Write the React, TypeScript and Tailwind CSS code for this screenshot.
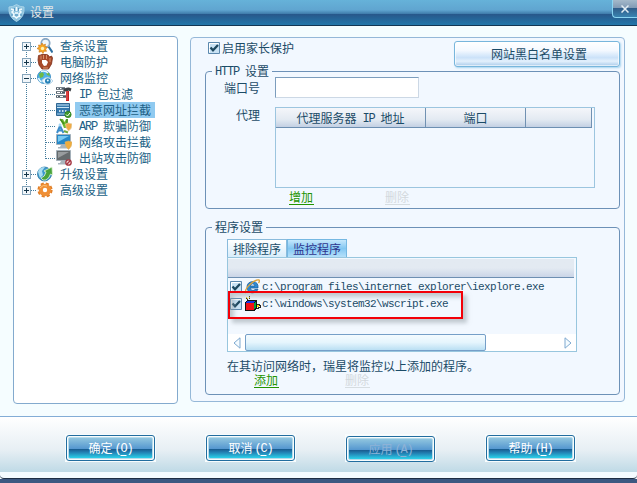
import { Fragment, type ReactNode } from "react";

// latin runs are half the width of a chinese glyph
const Txt = ({ children, small = false }: { children: string; small?: boolean }) => (
  <>
    {children.split(/([\x20-\x7e]+)/).map((part, i) =>
      i % 2 ? (
        <span
          key={i}
          className={`relative -top-px font-['Liberation_Mono',monospace] whitespace-pre ${
            small ? "text-[11px] tracking-[-0.6px]" : "text-[12px] tracking-[-1.2px]"
          }`}
        >
          {part}
        </span>
      ) : (
        <Fragment key={i}>{part}</Fragment>
      )
    )}
  </>
);

const ShieldIcon = () => (
  <svg width="17" height="18" viewBox="0 0 17 18">
    <path d="M1 3Q5 3 8.500 0.500Q12 3 16 3Q17 13 8.500 17.500Q0 13 1 3Z" fill="#8fc4df" stroke="#a9d4e8" />
    <path d="M3 5l3 1-2 2 2 2-1 3M14 5l-3 1 2 2-2 2 1 3M8.500 3v4M6 12l2.500 2 2.500-2M7 9h3" fill="none" stroke="#f1fbff" strokeWidth="1.500" />
    <path d="M6.500 4v3M10.500 4v3M7 11h3M4 10v2M13 10v2" stroke="#4386b2" strokeWidth=".8" />
  </svg>
);

const ScanIcon = () => (
  <svg width="16" height="16" viewBox="0 0 16 16">
    <path d="M11.500 8.500l4 6" stroke="#2d6fa0" strokeWidth="2.200" />
    <circle cx="8.500" cy="5" r="4.200" fill="#eef6fb" stroke="#8aa8c4" strokeWidth="1.800" />
    <path d="M5 5l1.200 2 2.300-.8-.5 2.300 2.500 1-2 1.500 1 2.300-2.500-.1L6 15.500l-1.500-2-2.500.7.4-2.500L0 10.500l2-1.300L1.500 7l2.300.3Z" fill="#f5a623" stroke="#cf7412" strokeWidth=".6" />
    <circle cx="5.500" cy="10.500" r="1.700" fill="#fff3b5" />
  </svg>
);

const GloveIcon = () => (
  <svg width="16" height="16" viewBox="0 0 16 16">
    <path d="M1 6L1.500 1.500l2-.5L5 .500l2 0L9 .500l2 .5 1.500 2 2-1 1 2-1 6-3 5H5L2 11Z" fill="#a84a2a" stroke="#7c2d19" strokeWidth=".8" />
    <path d="M4 1.500v4M6.500 1v4M9.500 1v4M13 4v4" stroke="#dd9b74" strokeWidth=".9" />
    <path d="M5 6h4l2 2-1.500 3.500L7 12 5 9Z" fill="#fff" />
    <path d="M6 14h5" stroke="#dd9b74" />
  </svg>
);

const GlobeEyeIcon = () => (
  <svg width="16" height="16" viewBox="0 0 16 16">
    <circle cx="7" cy="7" r="6.500" fill="#4cb2e8" stroke="#2b82bd" strokeWidth=".8" />
    <path d="M2 4l3-2 2 2-1 3-3 1ZM9 2l3 1 1 3-3-1Z" fill="#6dba45" />
    <path d="M4 1.500Q8 0 11 3M1.500 8q1 3 3 4" fill="none" stroke="#e7f8ff" strokeWidth="1.500" />
    <path d="M4.500 11q6-7.500 11.500 0q-5.500 7-11.500 0Z" fill="#eef8fe" stroke="#a1c6dd" strokeWidth=".7" />
    <circle cx="10.800" cy="11" r="2.800" fill="#2782b8" />
    <circle cx="10.800" cy="10.500" r="1" fill="#e4f9ff" />
  </svg>
);

const FilterIcon = () => (
  <svg width="16" height="16" viewBox="0 0 16 16">
    <path d="M0 2.500h9M0 6.500h9M0 10.500h10" stroke="#4d5b66" strokeWidth="2.500" />
    <path d="M1 2.500h1.500M4 2.500h1.500M1 6.500h3M5 6.500h1M1 10.500h1M4 10.500h3" stroke="#fff" />
    <path d="M7 4.500Q9 1 13 1.500l2.500 1-1 3-2-1-1 1H9Z" fill="#3c4045" />
    <path d="M11.500 5v10" stroke="#c51f22" strokeWidth="3" />
    <path d="M11 5v9" stroke="#f47771" strokeWidth=".8" />
  </svg>
);

const SiteIcon = () => (
  <svg width="16" height="16" viewBox="0 0 16 16">
    <path d="M.5 1.500h13v12H.500Z" fill="#3478ad" stroke="#316792" />
    <path d="M1 3h12M1 5.500h12" stroke="#cae4f4" />
    <path d="M3 9h1.500M6 9h1.500M9 9h1.500" stroke="#fff" strokeWidth="1.500" />
    <path d="M1 12h11" stroke="#a9d2ea" />
    <circle cx="12" cy="12.500" r="3.200" fill="#42992b" stroke="#267818" strokeWidth=".6" />
    <path d="M10 12.500l1.500 1.500 2.500-3" fill="none" stroke="#fff" />
  </svg>
);

const ArpIcon = () => (
  <svg width="16" height="16" viewBox="0 0 16 16">
    <path d="M4 1h3l1.500 3L10 1h2l-1 9H8Z" fill="#72bb30" />
    <path d="M4 1l4 5M11 1v8" stroke="#438d20" strokeWidth="1.400" />
    <path d="M1 15l3-7 3.500 7M2 12.500h5" fill="none" stroke="#3d8dca" strokeWidth="2" />
    <circle cx="4" cy="7" r="1.500" fill="#a3d6f5" />
    <path d="M9.500 6l3-1L16 6q0 5-3.500 7Q9.500 10 9.500 6Z" fill="#f2a945" stroke="#e2cfa0" strokeWidth=".8" />
    <path d="M8 13l4 1.500" stroke="#71a942" strokeWidth="2" />
  </svg>
);

const MonitorIcon = ({ blocked = false }: { blocked?: boolean }) => (
  <svg width="16" height="16" viewBox="0 0 16 16">
    <path d="M.5.500h14v10H.500Z" fill={blocked ? "#666b6d" : "#2688c8"} stroke="#a4b0b9" />
    <path d="M2 2h11L2 8Z" fill={blocked ? "#989c9e" : "#78c9f1"} />
    <path d="M5 11h5l1 2h2v1.500H2V13h2Z" fill="#a9b5bd" />
    {blocked ? (
      <g fill="#f5d7d7" stroke="#a43642" strokeWidth="1.300">
        <circle cx="12.500" cy="12.500" r="2.700" />
        <path d="M10.800 14.200l3.400-3.400" />
      </g>
    ) : (
      <path d="M9 8l3.500-1L16 8q0 5-3.500 7.500Q9 13 9 8Z" fill="#f0ad3c" stroke="#d9b06a" strokeWidth=".6" />
    )}
  </svg>
);

const UpgradeIcon = () => (
  <svg width="16" height="16" viewBox="0 0 16 16">
    <circle cx="7.500" cy="8" r="7" fill="#3c98cb" stroke="#3278a3" strokeWidth=".8" />
    <path d="M1 6Q2 1 8 1L5 5l1 4-3 3Z" fill="#a9ddf2" />
    <path d="M4 12Q8 11 9 6L7 5l8-4 .5 8-2-1Q11 15 6 14Z" fill="#48a33a" stroke="#e2f5d6" strokeWidth=".8" />
  </svg>
);

const GearIcon = () => (
  <svg width="16" height="16" viewBox="0 0 16 16">
    <circle cx="8" cy="8" r="6.300" fill="none" stroke="#e07f28" strokeWidth="2.600" strokeDasharray="3 1.950" />
    <circle cx="8" cy="8" r="4.200" fill="none" stroke="#ef8f35" strokeWidth="4" />
    <path d="M3 6Q6 2 10 4" fill="none" stroke="#ffc579" />
  </svg>
);

const IeIcon = () => (
  <svg width="15" height="15" viewBox="0 0 15 15">
    <path d="M13 9H5q.500 2.500 3 2.500 1 0 2-1h3Q11 14.500 7 14q-5-1-5-6t6-5.500Q13.500 3 13 9ZM5 7h5Q9.500 4.500 7.500 4.800 5.500 5 5 7Z" fill="#2c8ad3" fillRule="evenodd" stroke="#1b5d9c" strokeWidth=".8" />
    <path d="M1 14Q-1 11 5 5.500T14 1q1 1-.5 3" fill="none" stroke="#dfa43b" strokeWidth="1.400" />
  </svg>
);

const ScriptIcon = () => (
  <svg width="16" height="16" viewBox="0 0 16 16" shapeRendering="crispEdges">
    <path d="M0 6l2-2h9l1 1v7l-3 3H0Z" fill="#111" />
    <path d="M1 7h8v7H1Z" fill="#f00f16" />
    <path d="M1 6l2-1h7L9 7H1Z" fill="#1733df" />
    <path d="M9 7l2-2v6l-2 2Z" fill="#00a136" />
    <path d="M3 4l-2-2M4 3V0M12 8h2v1h1v2h-2v1h-1" fill="none" stroke="#222" />
    <path d="M1 1h1v1h1v1H2V2H1ZM4 1h1v1H4ZM12 9h2v2h-2Z" fill="#f6dd16" />
  </svg>
);

const Checkbox = () => (
  <svg width="12" height="12" viewBox="0 0 12 12" className="shrink-0">
    <path d="M.5.500h11v11H.500Z" fill="#c8e2f4" stroke="#5c89ae" />
    <path d="M1.500 10.500v-9h9" fill="none" stroke="#fff" />
    <path d="M2.500 5.500l2.500 2.700 5-5.200" fill="none" stroke="#1d485f" strokeWidth="2.300" />
  </svg>
);

// one 16px high piece of the dotted connector lines
const Branch = ({ from = 0, to = 16, arm = true, toggle }: { from?: number; to?: number; arm?: boolean; toggle?: string }) => (
  <svg width="19" height="16" className="shrink-0" shapeRendering="crispEdges">
    <path d={`M8.500 ${from}V${to}${arm ? "M9 8.500H18" : ""}`} stroke="#447c9c" strokeDasharray="1 1" />
    {toggle && (
      <>
        <path d="M4.500 4.500h8v8h-8Z" fill="#f1f6fa" stroke="#86a5bb" />
        <path d={toggle === "+" ? "M6 8.500h5M8.500 6v5" : "M6 8.500h5"} stroke="#143549" />
      </>
    )}
  </svg>
);

type Item = { label: string; icon: ReactNode; child?: boolean; toggle?: string; active?: boolean };

const items: Item[] = [
  { label: "查杀设置", icon: <ScanIcon />, toggle: "+" },
  { label: "电脑防护", icon: <GloveIcon />, toggle: "+" },
  { label: "网络监控", icon: <GlobeEyeIcon />, toggle: "-" },
  { label: "IP 包过滤", icon: <FilterIcon />, child: true },
  { label: "恶意网址拦截", icon: <SiteIcon />, child: true, active: true },
  { label: "ARP 欺骗防御", icon: <ArpIcon />, child: true },
  { label: "网络攻击拦截", icon: <MonitorIcon />, child: true },
  { label: "出站攻击防御", icon: <MonitorIcon blocked />, child: true },
  { label: "升级设置", icon: <UpgradeIcon />, toggle: "+" },
  { label: "高级设置", icon: <GearIcon />, toggle: "+" },
];

const Tree = () => (
  <div className="h-[368px] w-[165px] rounded-[4px] border border-[#83aace] bg-white pt-px pl-1 text-[#205f85]">
    {items.map((item, i) => (
      <div key={item.label} className="flex h-4 items-center">
        <Branch
          from={i === 0 ? 8 : 0}
          to={i === items.length - 1 ? 8 : 16}
          arm={!item.child}
          toggle={item.toggle}
        />
        {item.child && <Branch to={i === 7 ? 9 : 16} />}
        <span className="w-4 shrink-0">{item.icon}</span>
        <span className={`ml-[3px] h-4 px-1 leading-[15px] whitespace-nowrap ${item.active ? "bg-[#90caf0]" : ""}`}>
          <Txt>{item.label}</Txt>
        </span>
      </div>
    ))}
  </div>
);

const Links = ({ add, className }: { add: string; className: string }) => (
  <div className={`flex leading-[14px] ${className}`}>
    <a className="h-[15px] w-[25px] border-b border-[#229400] text-[#229400]">{add}</a>
    <a className="h-[15px] w-[25px] border-b border-[#d6dde1] text-[#d3d9dd]">删除</a>
  </div>
);

const HttpSettings = () => (
  <fieldset className="ml-[14px] h-[145px] w-[415px] rounded-[4px] border border-[#6d91b7]">
    <legend className="ml-[6px] h-[14px] px-[3px] leading-[14px]">
      <Txt>HTTP 设置</Txt>
    </legend>
    <div className="-mt-px flex gap-[15px] pl-[18px]">
      <div className="w-9 pt-[3px] text-right leading-4">
        <div>端口号</div>
        <div className="mt-[11px]">代理</div>
      </div>
      <div>
        <div className="h-[21px] w-[144px] border border-t-[#7c9dbd] border-r-[#ccd8e5] border-b-[#ccd8e5] border-l-[#7c9dbd] bg-white" />
        <div className="mt-[9px] h-[81px] w-[320px] border border-[#9cc5df] pr-[2px]">
          <div className="flex h-5 border-b border-[#6c8fb2] bg-linear-to-b from-[#f4f6fa] via-[#e3eaf2] via-60% to-[#c3d0e3] text-center leading-[19px]">
            <div className="w-[150px] border-r border-[#7191b2]"><Txt>代理服务器 IP 地址</Txt></div>
            <div className="w-[100px] border-r border-[#7191b2]">端口</div>
            <div className="flex-1 border-r border-[#7191b2]" />
          </div>
        </div>
        <Links add="增加" className="mt-[2px] gap-[71px] pl-[14px]" />
      </div>
    </div>
  </fieldset>
);

const ProgramSettings = () => (
  <fieldset className="mt-[11px] ml-[14px] h-[175px] w-[415px] rounded-[4px] border border-[#6d91b7]">
    <legend className="ml-[6px] h-[14px] px-[3px] leading-[14px]">程序设置</legend>
    <div className="pt-[5px] pl-[21px]">
      <div className="flex h-[18px] text-center leading-[17px]">
        <div className="w-[60px] border border-b-0 border-[#8abbdc] bg-linear-to-b from-white to-[#d8edfb]">排除程序</div>
        <div className="w-[60px] border border-b-0 border-[#75b8e2] bg-linear-to-b from-[#c4e7fc] via-[#83c7f2] to-[#b5e0fa] text-[#2f358d]">监控程序</div>
      </div>
      <div className="relative h-[95px] w-[350px] border border-[#98c6de]">
        <div className="mt-px mr-[2px] h-[19px] border-b border-[#6d8fb2] bg-linear-to-b from-[#e3eaf2] via-[#e3eaf2] via-50% to-[#cad5e7]" />
        <div className="flex h-[17px] items-center pl-[2px]">
          <Checkbox />
          <span className="ml-[3px] w-4"><IeIcon /></span>
          <span className="ml-px leading-4"><Txt small>{"c:\\program files\\internet explorer\\iexplore.exe"}</Txt></span>
        </div>
        <div className="flex h-[17px] items-center pl-[2px]">
          <Checkbox />
          <span className="ml-[3px] w-4"><ScriptIcon /></span>
          <span className="ml-px leading-4"><Txt small>{"c:\\windows\\system32\\wscript.exe"}</Txt></span>
        </div>
        <div className="mt-[22px] flex h-[17px] items-center bg-white pr-1 pl-[5px]">
          <svg width="8" height="12" viewBox="0 0 8 12">
            <path d="M7 .8v10.400L1 6Z" fill="#f4fbff" stroke="#7ea9d0" />
          </svg>
          <div className="ml-1 h-[17px] w-[241px] rounded-[2px] border border-[#759fc8] bg-linear-to-b from-[#f4fbff] via-[#e5f5fd] to-[#badff3]" />
          <svg width="8" height="12" viewBox="0 0 8 12" className="ml-auto">
            <path d="M1 .8v10.400L7 6Z" fill="#f4fbff" stroke="#7ea9d0" />
          </svg>
        </div>
        {/* highlight frame over the second row */}
        <div className="absolute top-[33px] left-0 h-[28px] w-[235px] border-2 border-[#f30008] shadow-[4px_4px_4px_#8f9ba180,inset_4px_4px_4px_#8f9ba180]" />
      </div>
      <div className="mt-[7px] leading-[14px]">在其访问网络时，瑞星将监控以上添加的程序。</div>
      <Links add="添加" className="gap-[66px] pl-[27px]" />
    </div>
  </fieldset>
);

const buttons = [
  { label: "确定", hotkey: "O" },
  { label: "取消", hotkey: "C" },
  { label: "应用", hotkey: "A", disabled: true },
  { label: "帮助", hotkey: "H" },
];

const Footer = () => (
  <div className="flex h-[56px] gap-[49px] border-t border-[#83add6] bg-linear-to-b from-white via-[#e7eff4] via-60% to-[#bfdae6] pt-[17px] pl-[65px]">
    {buttons.map(({ label, hotkey, disabled }) => (
      <div key={label} className={`h-[28px] w-[91px] bg-[#f8fcfd] px-px pb-px ${disabled ? "pt-[2px]" : "pt-px"}`}>
        <button
          className={`block h-[26px] w-[89px] rounded-[3px] border border-[#226d9f] p-px ${disabled ? "text-[#8db2d6]" : "text-white"}`}
        >
          <span className={`block h-full rounded-[2px] border border-[#b6dceb] bg-[linear-gradient(#90c5df,#5698d0_53%,#18578b_54%,#2382b4_72%,#2bd0e9)] ${disabled ? "leading-[19px]" : "leading-[20px]"}`}>
            {label}
            <span className="ml-[2px]"><Txt>(</Txt></span>
            <u className="underline-offset-2"><Txt>{hotkey}</Txt></u>
            <Txt>)</Txt>
          </span>
        </button>
      </div>
    ))}
  </div>
);

export default function App() {
  return (
    <div className="flex h-[483px] w-[637px] flex-col overflow-hidden bg-[#f5fdff] font-['Noto_Sans_CJK_SC',sans-serif] text-[12px] text-[#1b4b67]">
      <div className="flex h-[26px] shrink-0 items-center justify-between border-b border-[#123653] bg-[linear-gradient(#66b2d9,#60a5d0_40%,#427fae_54%,#285689_55%,#2277aa)]">
        <div className="flex items-center gap-[5px] pl-[8px] text-[#e5e8e8]">
          <ShieldIcon />
          <span className="-mt-[2px] leading-[14px]">设置</span>
        </div>
        <div className="flex h-[18px] w-[25px] items-center justify-center self-start rounded-bl-[4px] border-b border-l border-[#8bd5f2] bg-[linear-gradient(#a5b9ca,#829bb5_45%,#315e8a_50%,#3983b1)]">
          <svg width="8" height="8" viewBox="0 0 8 8">
            <path d="M.500.500l7 7M7.500.500l-7 7" stroke="#e2edf3" strokeWidth="1.500" />
          </svg>
        </div>
      </div>
      <div className="flex h-[390px] shrink-0 gap-3 pt-[10px] pl-[13px]">
        <Tree />
        <div className="mt-px h-[365px] w-[435px] rounded-[4px] border border-[#95b8d8] bg-[#f2f8ff]">
          <div className="flex h-[26px] justify-between pr-[4px] pl-[17px]">
            <div className="flex h-5 items-center gap-[2px]">
              <Checkbox />
              启用家长保护
            </div>
            <button className="mt-[3px] h-[26px] w-[166px] rounded-[3px] border border-[#78b6dc] bg-[linear-gradient(#fff,#f4f9ff_35%,#cbe2f9_65%,#e3f0fc_80%,#a9cbea)] pl-[4px] leading-[22px] shadow-[1px_1px_2px_#a6d4ef,inset_0_0_0_1px_#ffffffa0]">
              网站黑白名单设置
            </button>
          </div>
          <HttpSettings />
          <ProgramSettings />
        </div>
      </div>
      <Footer />
      <div className="h-[7px] rounded-b-[4px] border-b border-[#1e2e44] bg-[#f4fbff]" />
      <div className="flex-1 bg-[#3c5881]" />
    </div>
  );
}
